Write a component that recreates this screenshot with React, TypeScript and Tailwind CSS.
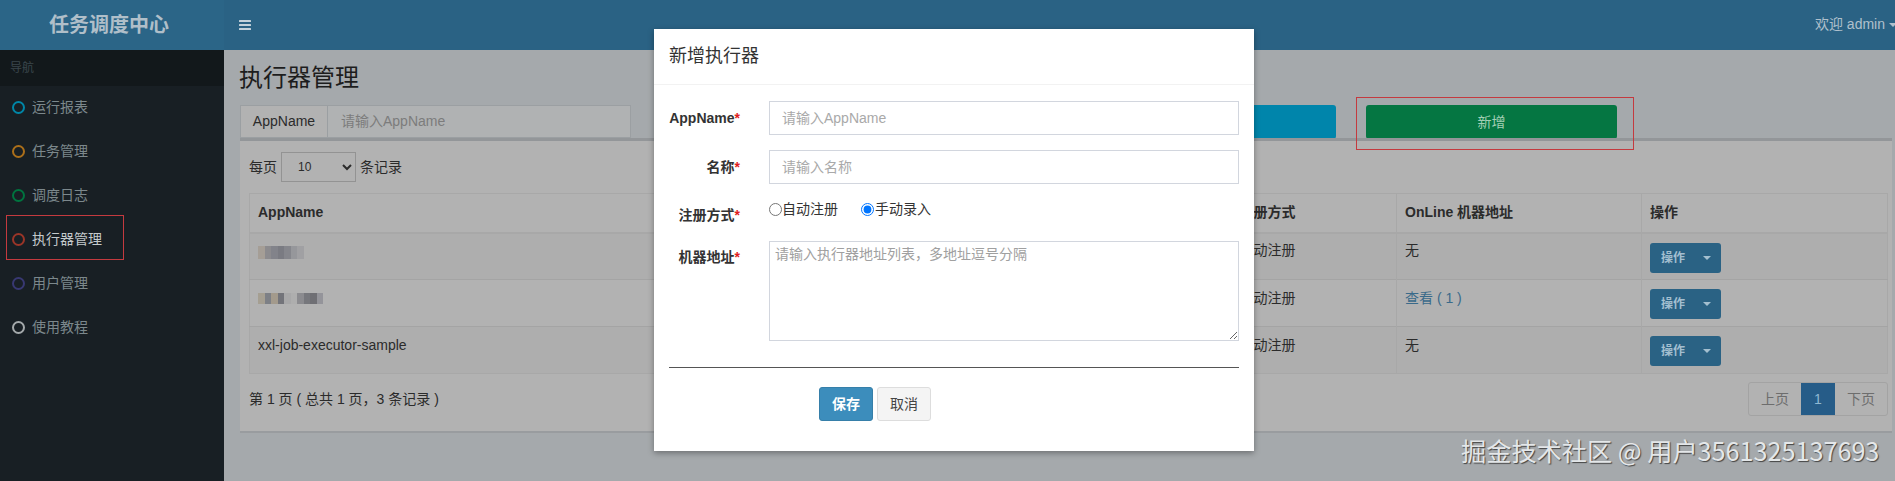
const FONT = "font-['Liberation_Sans','Noto_Sans_CJK_SC',sans-serif]";

const MENU = [
  { label: "运行报表", ring: "border-[#0086a7]" },
  { label: "任务管理", ring: "border-[#ab6f1a]" },
  { label: "调度日志", ring: "border-[#00743f]" },
  { label: "执行器管理", ring: "border-[#9a3528]" },
  { label: "用户管理", ring: "border-[#383872]" },
  { label: "使用教程", ring: "border-[#a4a9ab]" },
];

const MOSAIC_A = ["#a59e96", "#8c8b8e", "#82838a", "#7a7b82", "#85868c", "#96979b", "#a0a0a3"];
const MOSAIC_B = ["#a59f92", "#7d8086", "#a39a8c", "#73747a", "#a8a8a9", "#aeaeae", "#8b8b8f", "#76777c", "#6f6f74", "#94949a"];

function Mosaic({ colors, height, mt }: { colors: string[]; height: string; mt: string }) {
  return (
    <div className={`flex blur-[0.5px] ${height} ${mt}`}>
      {colors.map((c, i) => (
        <div key={i} className="w-[6.5px] h-full" style={{ backgroundColor: c }} />
      ))}
    </div>
  );
}

function ActionButton() {
  return (
    <div className="flex items-center w-[71px] h-[30px] rounded-[3px] bg-[#2a6284] text-[12px] text-[#a3bfd0] pl-[11px]">
      <span className="font-bold">操作</span>
      <span className="ml-[18px] w-0 h-0 border-x-[4px] border-t-[4px] border-x-transparent border-t-[#a3bfd0]" />
    </div>
  );
}

function Row({ striped, children }: { striped?: boolean; children: React.ReactNode }) {
  return (
    <tr className={`h-[47px] border-t border-[#a4a4a4] align-top ${striped ? "bg-[#aeaeae]" : "bg-[#b2b2b2]"}`}>
      {children}
    </tr>
  );
}

export default function App() {
  return (
    <div className={`relative flex h-[481px] w-[1895px] overflow-hidden bg-[#a5a9ac] text-[14px] text-[#2b2b2b] ${FONT}`}>
      {/* Sidebar */}
      <aside className="flex w-[224px] shrink-0 flex-col bg-[#181f24]">
        <div className="flex h-[49.5px] items-center justify-center pr-[6px] text-[20px] font-bold text-[#b0bfc9] bg-[#2b6587]">
          任务调度中心
        </div>
        <div className="flex h-[36px] items-center bg-[#12181b] pl-[10px] text-[12px] text-[#3a464c]">导航</div>
        <nav className="flex flex-col">
          {MENU.map((item) => (
            <div key={item.label} className="flex h-[44px] items-center pl-[11.5px]">
              <span className={`h-[13px] w-[13px] rounded-full border-[2.5px] ${item.ring}`} />
              <span className={`ml-[7.5px] ${item.label === "执行器管理" ? "text-[#c4cacc]" : "text-[#7c888c]"}`}>{item.label}</span>
            </div>
          ))}
        </nav>
      </aside>

      <div className="flex min-w-0 flex-1 flex-col">
        {/* Top bar */}
        <header className="flex h-[49.5px] shrink-0 items-center bg-[#2a6284] pl-[15px]">
          <svg width="12" height="10" viewBox="0 0 12 10" fill="#c3d2db">
            <rect width="12" height="2" rx="0.5" />
            <rect y="4" width="12" height="2" rx="0.5" />
            <rect y="8" width="12" height="2" rx="0.5" />
          </svg>
          <span className="ml-auto mr-[4px] text-[14px] whitespace-nowrap text-[#afc0cc]">欢迎 admin</span>
          <span className="-mr-[2px] h-0 w-0 border-x-[4px] border-t-[4px] border-x-transparent border-t-[#afc0cc]" />
        </header>

        <main className="flex flex-col pl-[16px] pr-[3px]">
          <h1 className="-ml-[1px] flex h-[55.5px] items-center pt-[1px] text-[24px] text-[#1d1d1d]">执行器管理</h1>

          {/* Search row */}
          <div className="flex h-[34px]">
            <div className="flex h-[33px] w-[391px] border border-[#9b9fa2] bg-[#b0b2b3]">
              <div className="flex w-[87px] items-center justify-center border-r border-[#9b9fa2] bg-[#b2b2b2]">AppName</div>
              <input
                placeholder="请输入AppName"
                className="min-w-0 flex-1 bg-transparent pl-[13px] outline-none placeholder:text-[#7c7c7c]"
              />
            </div>
            <div className="ml-[454px] h-[34px] w-[251px] rounded-[3px] bg-[#0085ab]" />
            <div className="ml-[30px] flex h-[34px] w-[251px] items-center justify-center rounded-[3px] bg-[#057642] text-[#a3cfb5]">
              新增
            </div>
          </div>

          {/* Box */}
          <section className="-mt-[1px] flex h-[295px] flex-col border-t-[3px] border-b-[2px] border-t-[#939699] border-b-[#999c9f] bg-[#b2b2b2] pl-[9px] pr-[4px]">
            <div className="mt-[11px] flex h-[30px] shrink-0 items-center">
              <span>每页</span>
              <select className="ml-[4px] h-[30px] w-[75px] border border-[#939393] bg-[#b2b2b2] pl-[12px] text-[12px]">
                <option>10</option>
              </select>
              <span className="ml-[4px]">条记录</span>
            </div>

            <table className="mt-[11px] w-full shrink-0 table-fixed border-collapse border-x border-b border-[#a8a8a8]">
              <colgroup>
                <col />
                <col className="w-[165px]" />
                <col className="w-[245px]" />
                <col className="w-[246px]" />
              </colgroup>
              <thead>
                <tr className="h-[39px] border-t border-b-2 border-[#a8a8a8] text-left">
                  <th className="px-[8px] font-bold">AppName</th>
                  <th className="px-[8px] font-bold">注册方式</th>
                  <th className="border-l border-[#a8a8a8] px-[8px] font-bold">OnLine 机器地址</th>
                  <th className="border-l border-[#a8a8a8] px-[8px] font-bold">操作</th>
                </tr>
              </thead>
              <tbody>
                <Row striped>
                  <td className="px-[8px]">
                    <Mosaic colors={MOSAIC_A} height="h-[13px]" mt="mt-[12px]" />
                  </td>
                  <td className="px-[8px] pt-[6px]">自动注册</td>
                  <td className="border-l border-[#a8a8a8] px-[8px] pt-[6px]">无</td>
                  <td className="border-l border-[#a8a8a8] px-[8px] pt-[9px]">
                    <ActionButton />
                  </td>
                </Row>
                <Row>
                  <td className="px-[8px]">
                    <Mosaic colors={MOSAIC_B} height="h-[11px]" mt="mt-[13px]" />
                  </td>
                  <td className="px-[8px] pt-[8px]">自动注册</td>
                  <td className="border-l border-[#a8a8a8] px-[8px] pt-[8px] text-[#3a6a8a]">查看 ( 1 )</td>
                  <td className="border-l border-[#a8a8a8] px-[8px] pt-[9px]">
                    <ActionButton />
                  </td>
                </Row>
                <Row striped>
                  <td className="px-[8px] pt-[8px]">xxl-job-executor-sample</td>
                  <td className="px-[8px] pt-[8px]">自动注册</td>
                  <td className="border-l border-[#a8a8a8] px-[8px] pt-[8px]">无</td>
                  <td className="border-l border-[#a8a8a8] px-[8px] pt-[9px]">
                    <ActionButton />
                  </td>
                </Row>
              </tbody>
            </table>

            <div className="mt-[8px] flex h-[34px] shrink-0 items-center">
              <span>第 1 页 ( 总共 1 页，3 条记录 )</span>
              <div className="ml-auto flex h-[34px] overflow-hidden rounded-[3px] border border-[#a3a3a3] text-[#6d6d6d]">
                <span className="flex w-[52px] items-center justify-center">上页</span>
                <span className="flex w-[34px] items-center justify-center bg-[#265c88] text-[#8fb8d2]">1</span>
                <span className="flex w-[52px] items-center justify-center">下页</span>
              </div>
            </div>
          </section>
        </main>
      </div>

      {/* Annotation boxes drawn on the screenshot */}
      <div className="absolute left-[6px] top-[215px] h-[45px] w-[118px] border border-[#c43a3f]" />
      <div className="absolute left-[1356px] top-[97px] h-[53px] w-[278px] border border-[#c43a3f]" />

      {/* Modal */}
      <div className="absolute left-[654px] top-[29px] flex h-[422px] w-[600px] flex-col bg-white px-[15px] text-[#333] shadow-[0_2px_6px_rgba(0,0,0,0.35)]">
        <div className="-mx-[15px] flex h-[56px] shrink-0 items-center border-b border-[#f2f2f2] pl-[15px] text-[18px]">
          新增执行器
        </div>

        <div className="mt-[16px] flex h-[34px] items-center">
          <label className="w-[71px] text-right font-bold">
            AppName<span className="text-[#e02020]">*</span>
          </label>
          <input
            placeholder="请输入AppName"
            className="ml-[29px] h-[34px] w-[470px] border border-[#d2d6de] pl-[12px] outline-none placeholder:text-[#a9a9a9]"
          />
        </div>

        <div className="mt-[15px] flex h-[34px] items-center">
          <label className="w-[71px] text-right font-bold">
            名称<span className="text-[#e02020]">*</span>
          </label>
          <input
            placeholder="请输入名称"
            className="ml-[29px] h-[34px] w-[470px] border border-[#d2d6de] pl-[12px] outline-none placeholder:text-[#a9a9a9]"
          />
        </div>

        <div className="mt-[15px] flex h-[42px]">
          <label className="mt-[6px] h-[20px] w-[71px] whitespace-nowrap text-right font-bold">
            注册方式<span className="text-[#e02020]">*</span>
          </label>
          <div className="ml-[29px] flex h-[21px] items-center">
            <input type="radio" name="addressType" className="h-[13px] w-[13px]" />
            <span>自动注册</span>
            <input type="radio" name="addressType" defaultChecked className="ml-[23px] h-[13px] w-[13px]" />
            <span className="ml-[1px]">手动录入</span>
          </div>
        </div>

        <div className="flex">
          <label className="mt-[6px] h-[20px] w-[71px] whitespace-nowrap text-right font-bold">
            机器地址<span className="text-[#e02020]">*</span>
          </label>
          <textarea
            placeholder="请输入执行器地址列表，多地址逗号分隔"
            className="ml-[29px] h-[100px] w-[470px] border border-[#d2d6de] px-[5px] py-[2px] outline-none placeholder:text-[#a0a0a0]"
          />
        </div>

        <div className="mt-[26px] h-px w-[570px] shrink-0 bg-[#555]" />

        <div className="mt-[19px] flex pl-[150px]">
          <div className="flex h-[34px] w-[54px] items-center justify-center rounded-[3px] border border-[#367fa9] bg-[#3c8dbc] font-bold text-white">
            保存
          </div>
          <div className="ml-[4px] flex h-[34px] w-[54px] items-center justify-center rounded-[3px] border border-[#ddd] bg-[#f4f4f4] text-[#444]">
            取消
          </div>
        </div>
      </div>

      {/* Watermark */}
      <div className="absolute left-[1461px] top-[433px] whitespace-nowrap font-['Noto_Sans_CJK_SC',sans-serif] text-[25.2px] leading-[34px] text-[#e4e7e9] [text-shadow:1px_1px_1px_#444]">
        掘金技术社区 @ 用户3561325137693
      </div>
    </div>
  );
}
